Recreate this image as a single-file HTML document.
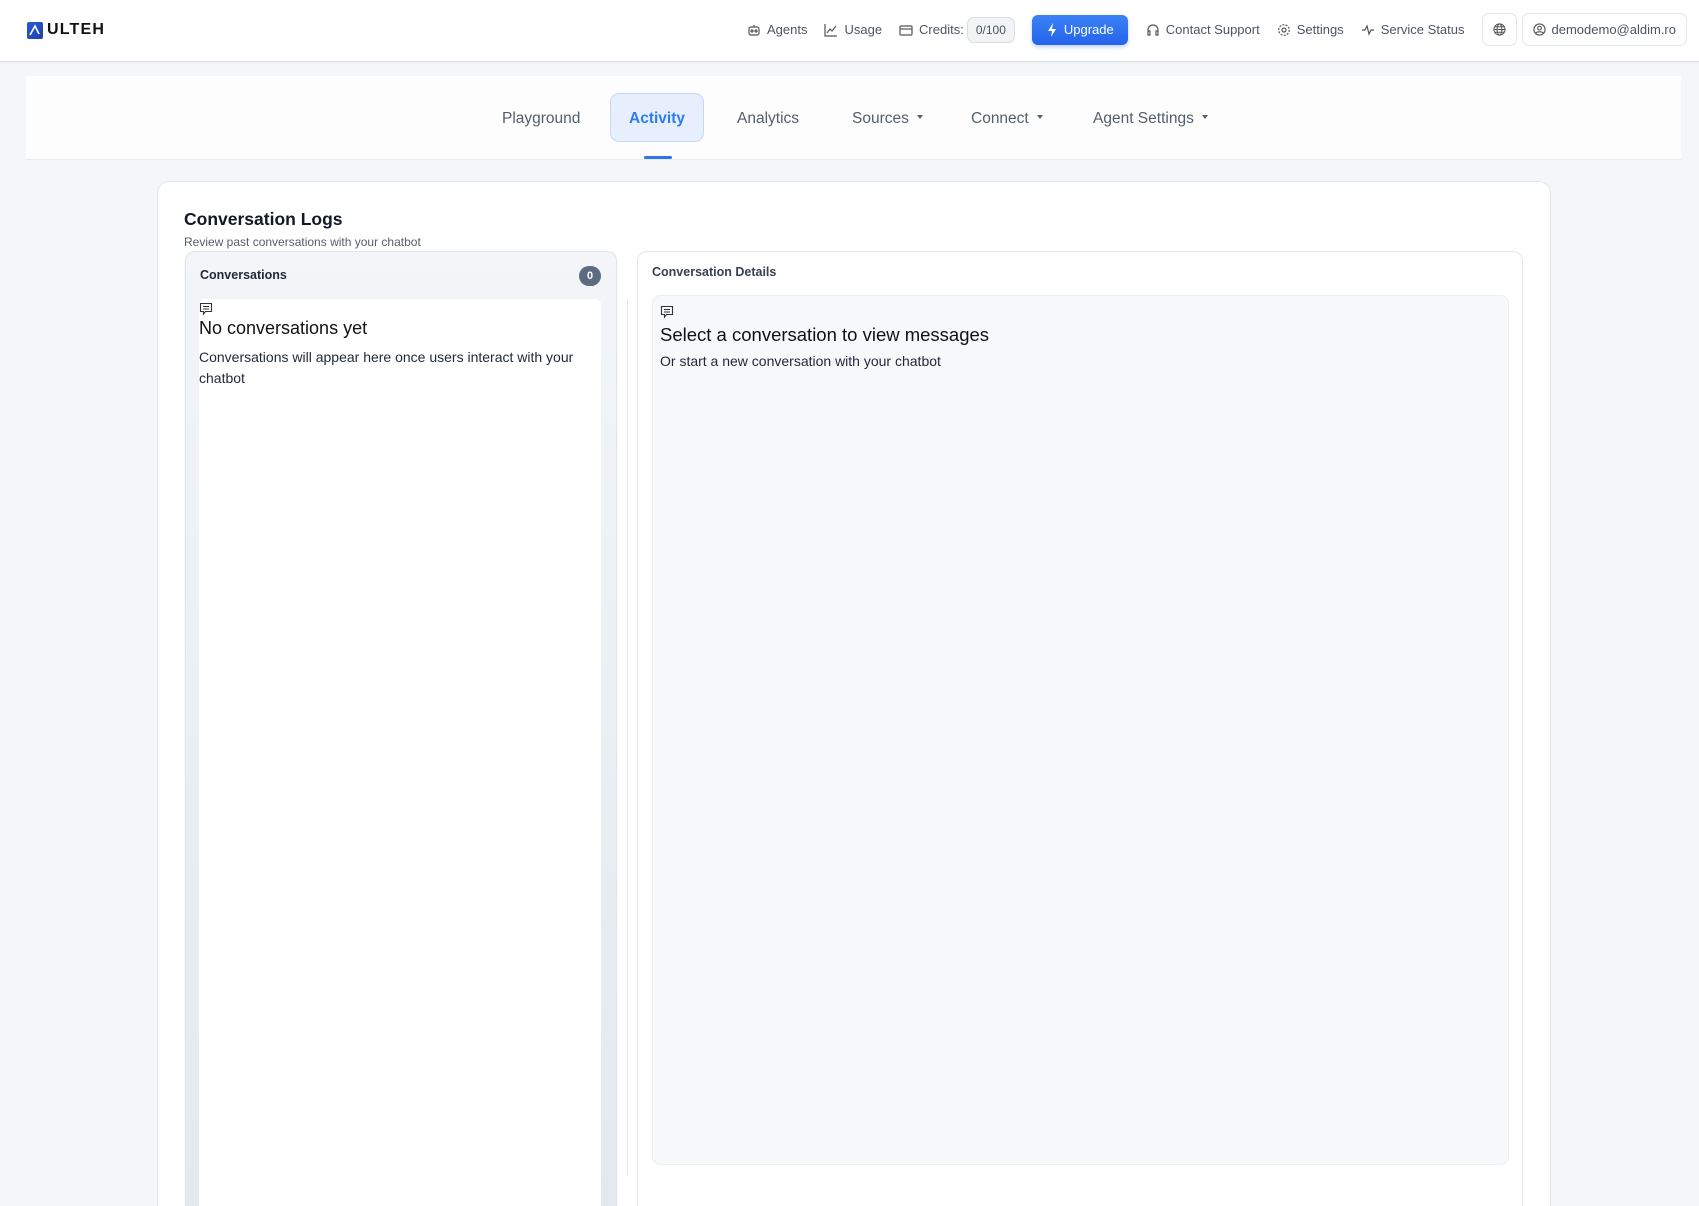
<!DOCTYPE html>
<html><head><meta charset="utf-8"><style>
*{box-sizing:border-box;margin:0;padding:0}
html,body{width:1699px;height:1206px;overflow:hidden;background:#f5f6f8;font-family:"Liberation Sans",sans-serif;color:#111827}
#w{position:relative;width:1699px;height:1206px;overflow:hidden}
.hdr{position:absolute;left:0;top:0;width:1699px;height:62px;background:#fff;border-bottom:1px solid #dde3ea;box-shadow:0 1px 2px rgba(0,0,0,.04)}
.logo{position:absolute;left:27px;top:21px;display:flex;align-items:center}
.logo .sq{width:16px;height:17px;background:linear-gradient(135deg,#2a5bd7,#1e3fa8);border-radius:2px;margin-right:4px;position:relative}
.logo span{font-size:16px;font-weight:bold;letter-spacing:1.2px;color:#111}
.nav{position:absolute;top:13px;right:0;display:flex;align-items:center;font-size:13px;color:#4b5563}
.nav .it{display:flex;align-items:center;margin-right:17px;height:30px}
.nav svg{margin-right:6px}
.cr{border:1px solid #d9dde3;background:#f1f3f5;border-radius:7px;padding:5px 8px;font-size:12px;margin-left:3px}
.up{background:linear-gradient(#3b82f6,#2563eb);color:#fff;border-radius:6px;height:30px;padding:0 14px;display:flex;align-items:center;margin-right:18px;box-shadow:0 2px 4px rgba(37,99,235,.3)}
.bx{border:1px solid #e3e6ea;border-radius:7px;height:33px;display:flex;align-items:center;padding:0 10px;margin-right:12px;background:#fff}
.tabs{position:absolute;left:26px;top:76px;width:1655px;height:84px;background:#fdfdfd;border-bottom:1px solid #e8ebef}
.tab{position:absolute;top:0;height:84px;line-height:86px;font-size:15.5px;color:#555e6c;white-space:nowrap}
.tab .car{display:inline-block;width:0;height:0;border-left:3.5px solid transparent;border-right:3.5px solid transparent;border-top:4px solid #555e6c;margin-left:8px;vertical-align:middle;position:relative;top:-2px}
.act{position:absolute;left:584px;top:17px;width:94px;height:49px;background:#e8effc;border:1px solid #c6d8f8;border-radius:9px;color:#2f7cf0;font-weight:bold;font-size:15.5px;text-align:center;line-height:49px}
.ul{position:absolute;left:618px;top:80px;width:28px;height:3px;background:#2f74e8;border-radius:2px}
.card{position:absolute;left:157px;top:181px;width:1394px;height:1025px;background:#fff;border:1px solid #e3e6ea;border-bottom:none;border-radius:12px 12px 0 0}
h1{position:absolute;left:184px;top:209px;font-size:17.5px;font-weight:bold;color:#111827}
.sub{position:absolute;left:184px;top:235px;font-size:12px;color:#555e6c}
.lp{position:absolute;left:185px;top:251px;width:432px;height:955px;background:linear-gradient(#f3f5f8,#e4e9f0);border:1px solid #dfe4ea;border-bottom:none;border-radius:10px 10px 0 0;box-shadow:0 1px 3px rgba(0,0,0,.05)}
.lp .t{position:absolute;left:14px;top:16px;font-size:12.5px;font-weight:bold;color:#1f2937}
.badge{position:absolute;left:393px;top:14px;width:22px;height:20px;border-radius:10px;background:#5d6b80;color:#fff;font-size:11px;font-weight:bold;text-align:center;line-height:20px}
.lw{position:absolute;left:13px;top:47px;width:402px;height:908px;background:#fff;border-radius:6px 6px 0 0}
.ico{position:absolute}
.lw .h{position:absolute;left:0;top:19px;font-size:18px;color:#111}
.lw p{position:absolute;left:0;top:48px;width:400px;font-size:14px;line-height:20.5px;color:#1f2937}
.div{position:absolute;left:627px;top:300px;width:1px;height:876px;background:#e3e6ea}
.rp{position:absolute;left:637px;top:251px;width:886px;height:955px;background:#fff;border:1px solid #e3e6ea;border-bottom:none;border-radius:10px 10px 0 0}
.rp .t{position:absolute;left:14px;top:13px;font-size:12.5px;font-weight:bold;color:#374151}
.rg{position:absolute;left:14px;top:43px;width:857px;height:870px;background:#f7f8fa;border:1px solid #eceef1;border-radius:8px}
.rg .h{position:absolute;left:7px;top:28px;font-size:18.5px;color:#111}
.rg p{position:absolute;left:7px;top:57px;font-size:14px;color:#1f2937}
</style></head><body><div id="w">
<div class="hdr">
 <div class="logo"><div class="sq"><svg width="16" height="17" viewBox="0 0 16 17"><path d="M3 13 L8 4 L12 12" stroke="#fff" stroke-width="1.6" fill="none"/></svg></div><span>ULTEH</span></div>
 <div class="nav">
  <div class="it"><svg width="14" height="14" viewBox="0 0 14 14" fill="none" stroke="#555" stroke-width="1.2"><rect x="2" y="4" width="10" height="8" rx="2"/><circle cx="5" cy="8" r="1"/><circle cx="9" cy="8" r="1"/><path d="M7 4V2"/></svg>Agents</div>
  <div class="it"><svg width="14" height="14" viewBox="0 0 14 14" fill="none" stroke="#555" stroke-width="1.2"><path d="M1 1v12h12M3 10l3-4 2 2 4-5"/></svg>Usage</div>
  <div class="it"><svg width="14" height="14" viewBox="0 0 14 14" fill="none" stroke="#555" stroke-width="1.2"><rect x="1" y="3" width="12" height="9" rx="1"/><path d="M1 6h12"/></svg>Credits:<span class="cr">0/100</span></div>
  <div class="up"><svg width="12" height="14" viewBox="0 0 12 14"><path d="M7 0L2 8h4l-1 6 5-8H6z" fill="#fff"/></svg>Upgrade</div>
  <div class="it"><svg width="14" height="14" viewBox="0 0 14 14" fill="none" stroke="#555" stroke-width="1.2"><path d="M2 9V7a5 5 0 0110 0v2M2 8h2v4H2zM10 8h2v4h-2z"/></svg>Contact Support</div>
  <div class="it"><svg width="14" height="14" viewBox="0 0 14 14" fill="none" stroke="#555" stroke-width="1.2"><circle cx="7" cy="7" r="2"/><circle cx="7" cy="7" r="5.3" stroke-dasharray="2 1.3"/></svg>Settings</div>
  <div class="it"><svg width="14" height="14" viewBox="0 0 14 14" fill="none" stroke="#555" stroke-width="1.2"><path d="M1 7h3l2-4 2 8 2-4h3"/></svg>Service Status</div>
  <div class="bx" style="margin-right:5px"><svg width="13" height="13" viewBox="0 0 14 14" fill="none" stroke="#555" stroke-width="1.1" style="margin:0"><circle cx="7" cy="7" r="6"/><ellipse cx="7" cy="7" rx="2.6" ry="6"/><path d="M1 7h12M2 4h10M2 10h10"/></svg></div>
  <div class="bx"><svg width="13" height="13" viewBox="0 0 14 14" fill="none" stroke="#555" stroke-width="1.2"><circle cx="7" cy="7" r="6"/><circle cx="7" cy="5.5" r="2"/><path d="M3 11c1-2 7-2 8 0"/></svg>demodemo@aldim.ro</div>
 </div>
</div>
<div class="tabs">
 <div class="tab" style="left:476px">Playground</div>
 <div class="act">Activity</div>
 <div class="ul"></div>
 <div class="tab" style="left:711px">Analytics</div>
 <div class="tab" style="left:826px">Sources<span class="car"></span></div>
 <div class="tab" style="left:945px">Connect<span class="car"></span></div>
 <div class="tab" style="left:1067px">Agent Settings<span class="car"></span></div>
</div>
<div class="card"></div>
<h1>Conversation Logs</h1>
<div class="sub">Review past conversations with your chatbot</div>
<div class="lp">
 <div class="t">Conversations</div><div class="badge">0</div>
 <div class="lw">
  <svg class="ico" style="left:0;top:3px" width="14" height="14" viewBox="0 0 14 14" fill="none" stroke="#333" stroke-width="1.1"><path d="M1.5 1.5h11v8h-6l-2 2.5v-2.5h-3z"/><path d="M4 4.5h6M4 7h6"/></svg>
  <div class="h">No conversations yet</div>
  <p>Conversations will appear here once users interact with your chatbot</p>
 </div>
</div>
<div class="div"></div>
<div class="rp">
 <div class="t">Conversation Details</div>
 <div class="rg">
  <svg class="ico" style="left:7px;top:9px" width="14" height="14" viewBox="0 0 14 14" fill="none" stroke="#333" stroke-width="1.1"><path d="M1.5 1.5h11v8h-6l-2 2.5v-2.5h-3z"/><path d="M4 4.5h6M4 7h6"/></svg>
  <div class="h">Select a conversation to view messages</div>
  <p>Or start a new conversation with your chatbot</p>
 </div>
</div>
</div></body></html>
